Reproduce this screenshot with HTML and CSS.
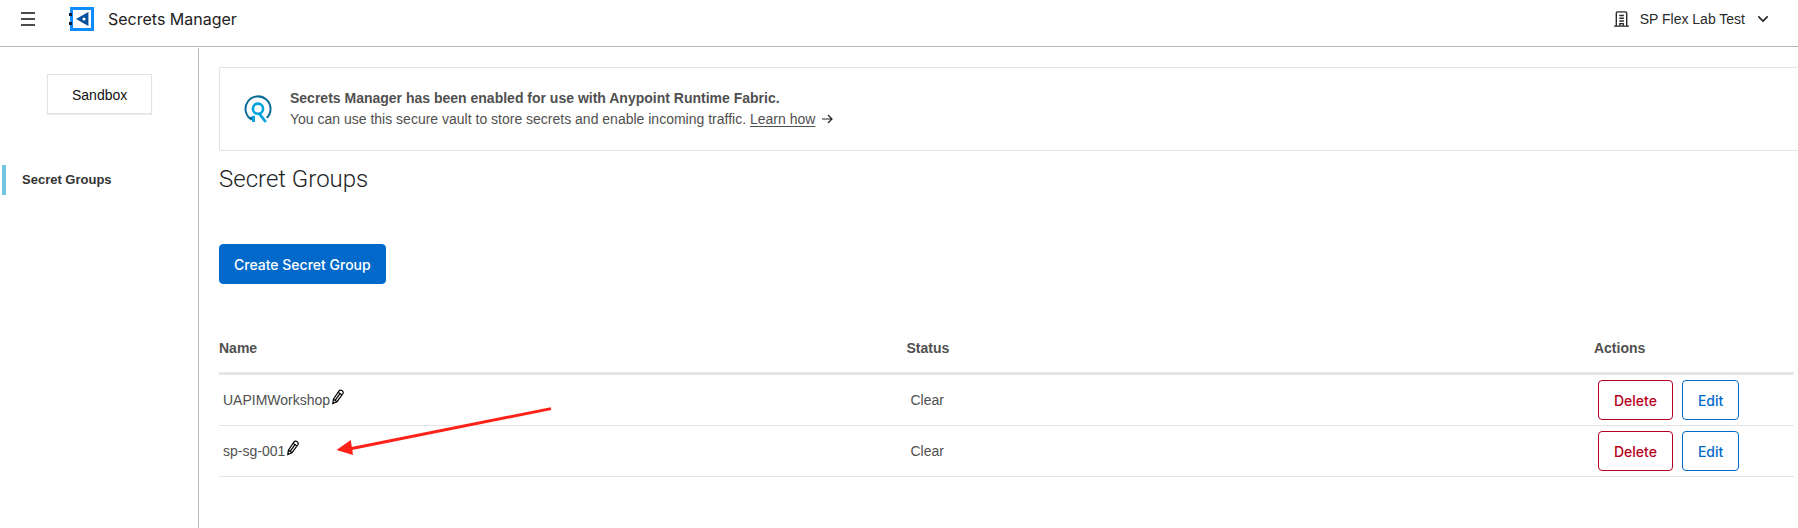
FILE: index.html
```html
<!DOCTYPE html>
<html lang="en">
<head>
<meta charset="utf-8">
<title>Secrets Manager</title>
<meta name="viewport" content="width=device-width, initial-scale=1">
<link rel="stylesheet" href="styles.css">
</head>
<body>
<header class="topbar">
  <button class="menu-button" type="button" aria-label="Menu">
    <svg width="14" height="16" viewBox="0 0 14 16"><path d="M0 2h14M0 8h14M0 14h14" stroke="#111" stroke-width="1.6"/></svg>
  </button>
  <svg class="logo" width="26" height="26" viewBox="0 0 26 26">
    <rect x="2.5" y="2.5" width="21" height="21" fill="#fff" stroke="#0c8cff" stroke-width="3"/>
    <path d="M0 7h3v3H0zM0 16h3v3H0z" fill="#111a2c"/>
    <path fill-rule="evenodd" d="M7 13 19.4 6V20ZM13.4 13a1.6 1.6 0 1 0 3.2 0a1.6 1.6 0 1 0-3.2 0Z" fill="#06509c"/>
  </svg>
  <span class="product">Secrets Manager</span>
  <button class="org-button" type="button">
    <svg width="15" height="16" viewBox="0 0 15 16" fill="none" stroke="#2a2a2a" stroke-width="1.4">
      <path d="M0 15.1h15M2.3 15V2.2Q2.3.9 3.6.9h7.8q1.3 0 1.3 1.3V15M5.3 4.5h4.6M5.3 7.3h4.6M5.3 10h4.6M5.8 15v-2.4h3.4V15"/>
    </svg>
    <span>SP Flex Lab Test</span>
    <svg class="chevron" width="12" height="8" viewBox="0 0 12 8" fill="none" stroke="#222" stroke-width="1.6"><path d="M1.3 1.4 6 6.1l4.7-4.7"/></svg>
  </button>
</header>
<div class="layout">
  <aside class="sidebar">
    <button class="env-button" type="button">Sandbox</button>
    <nav class="side-nav"><a class="side-link" href="#groups">Secret Groups</a></nav>
  </aside>
  <main class="content">
    <section class="banner">
      <svg width="28" height="28" viewBox="0 0 28 28" fill="none">
        <path d="M7.6 24.6A12.5 12.5 0 1 1 22.7 22.9" stroke="#0a6c98" stroke-width="2"/>
        <path d="M5 22.6l4.6-1.6v5.4z" fill="#0a6c98"/>
        <circle cx="14" cy="13.7" r="5.1" stroke="#00a2df" stroke-width="2.6"/>
        <path d="M9.6 27v-6.2M15 18.4l6.8 8.6" stroke="#00a2df" stroke-width="2.8"/>
      </svg>
      <div class="banner-text">
        <strong>Secrets Manager has been enabled for use with Anypoint Runtime Fabric.</strong>
        <p>You can use this secure vault to store secrets and enable incoming traffic. <a href="#learn">Learn how</a>
          <svg width="11" height="10" viewBox="0 0 11 10" fill="none" stroke="#222" stroke-width="1.2"><path d="M0 5h10M6 1l4 4-4 4"/></svg></p>
      </div>
    </section>
    <h1 class="title" id="groups">Secret Groups</h1>
    <button class="button primary" type="button">Create Secret Group</button>
    <div class="table-wrap">
      <table class="groups">
        <colgroup><col class="col-wide"><col class="col-wide"><col></colgroup>
        <thead><tr><th scope="col">Name</th><th scope="col">Status</th><th scope="col">Actions</th></tr></thead>
        <tbody>
          <tr>
            <td><div class="name"><span>UAPIMWorkshop</span><button class="rename" type="button" aria-label="Rename UAPIMWorkshop"><svg width="12" height="16" viewBox="0 0 12 16" fill="none" stroke="#000" stroke-width="1.2"><path d="M.8 14.6 1.4 10.2 7 1.9Q8.2.5 10 1.6q1.8 1.3 1 2.9L5 12.7ZM1.4 10.2 5 12.7M6.1 3.3l3.7 2.5M3.3 11.2 8 4.6"/></svg></button></div></td>
            <td>Clear</td>
            <td><div class="actions"><button class="button danger" type="button">Delete</button><button class="button outline" type="button">Edit</button></div></td>
          </tr>
          <tr>
            <td><div class="name"><span>sp-sg-001</span><button class="rename" type="button" aria-label="Rename sp-sg-001"><svg width="12" height="16" viewBox="0 0 12 16" fill="none" stroke="#000" stroke-width="1.2"><path d="M.8 14.6 1.4 10.2 7 1.9Q8.2.5 10 1.6q1.8 1.3 1 2.9L5 12.7ZM1.4 10.2 5 12.7M6.1 3.3l3.7 2.5M3.3 11.2 8 4.6"/></svg></button></div></td>
            <td>Clear</td>
            <td><div class="actions"><button class="button danger" type="button">Delete</button><button class="button outline" type="button">Edit</button></div></td>
          </tr>
        </tbody>
      </table>
      <svg class="pointer" width="216" height="50" viewBox="0 0 216 50"><path d="M12 42.3 215 1.6" stroke="#ff2018" stroke-width="3"/><path d="M.5 43 14.8 33 17 48Z" fill="#ff2018"/></svg>
    </div>
  </main>
</div>
</body>
</html>
```
FILE: styles.css
```css
* { box-sizing: border-box; }
body {
  display: flex;
  flex-direction: column;
  min-height: 100vh;
  margin: 0;
  background: #fff;
  color: #505050;
  font: 14px/21px "Liberation Sans", Arial, sans-serif;
  overflow-x: hidden;
}
button { background: none; border: 0; padding: 0; font: inherit; color: inherit; cursor: pointer; }
svg { flex: none; }

.topbar {
  display: flex;
  align-items: center;
  height: 47px;
  padding: 0 29px 8px 21px;
  border-bottom: 1px solid #b9b9b9;
}
.menu-button { display: flex; }
.logo { margin-left: 34px; }
.product { margin-left: 13px; color: #222; font: 16px/24px Inter, sans-serif; }
.org-button { display: flex; align-items: center; gap: 11px; margin-left: auto; color: #2a2a2a; }
.chevron { margin-left: 1px; }

.layout { display: flex; flex: 1; padding-top: 1px; }
.sidebar { flex: none; width: 199px; padding-top: 26px; border-right: 1px solid #b9b9b9; }
.env-button {
  display: block;
  height: 40px;
  margin-left: 47px;
  padding: 2px 24px 0;
  border: 1px solid #e3e3e3;
  box-shadow: 0 1px 1px #eee;
  color: #111;
  font-size: 14px;
}
.side-nav { margin-top: 51px; padding-left: 2px; }
.side-link {
  display: block;
  padding-left: 16px;
  border-left: 4px solid #76c5e0;
  color: #333;
  font-size: 13px;
  font-weight: 700;
  line-height: 30px;
  text-decoration: none;
}

.content { flex: 1; min-width: 0; padding: 19px 0 0 20px; }
.banner {
  display: flex;
  align-items: center;
  gap: 18px;
  height: 84px;
  padding: 0 24px;
  border: 1px solid #e3e3e3;
  border-right: 0;
  border-radius: 2px 0 0 2px;
}
.banner-text p { margin: 0; }
.banner-text a { color: inherit; text-underline-offset: 2px; }
.banner-text svg { margin-left: 3px; }
.title { margin: 12px 0 49px; color: #222; font: 300 24px/32px Roboto, sans-serif; }

.button {
  height: 40px;
  padding: 1px 15px 0;
  border: 1px solid;
  border-radius: 4px;
  font: 500 14px/20px Inter, sans-serif;
}
.primary { padding: 1px 14px 0; border-color: #0069ca; background: #0069ca; color: #fff; }
.danger { color: #b60021; }
.outline { color: #0069ca; }

.table-wrap { position: relative; margin: 48px 4px 0 0; }
.groups { width: 100%; border-collapse: separate; border-spacing: 0; table-layout: fixed; }
.col-wide { width: 43.65%; }
.groups th { height: 43px; padding: 6px 0 0; border-bottom: 3px solid #e6e6e6; text-align: left; vertical-align: top; }
.groups td { height: 51px; padding: 0 4px; border-bottom: 1px solid #e3e3e3; }
.name { display: flex; align-items: center; }
.rename { display: flex; margin: 0 0 6px 2px; }
.actions { display: flex; gap: 9px; }
.pointer { position: absolute; left: 117px; top: 75px; }
```
